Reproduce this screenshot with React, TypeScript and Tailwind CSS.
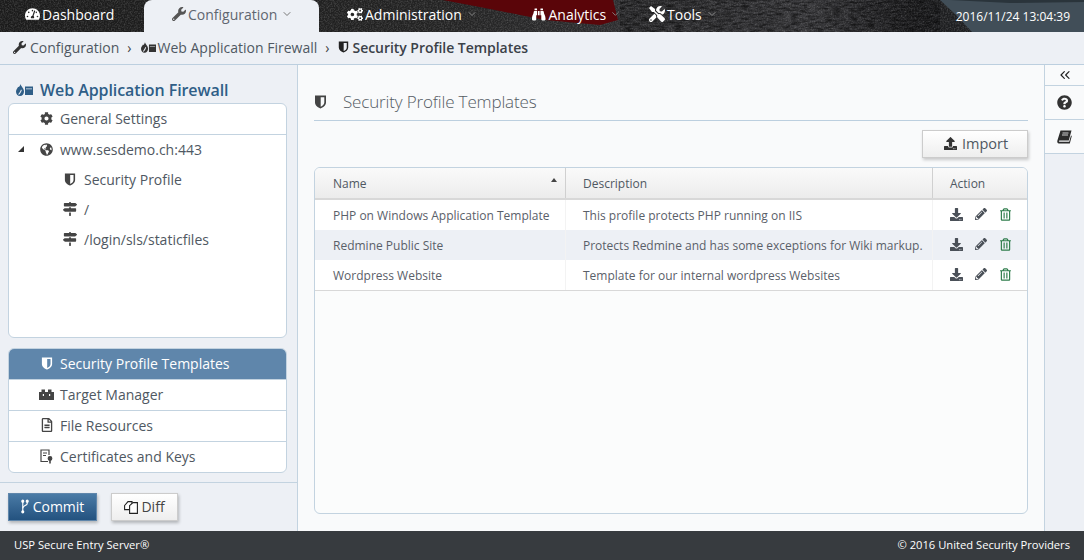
import { ChevronDown, ChevronsLeft } from "lucide-react";
import {
  FaBinoculars,
  FaCog,
  FaCogs,
  FaDownload,
  FaGlobeAmericas,
  FaMapSigns,
  FaPencilAlt,
  FaQuestionCircle,
  FaRegFileAlt,
  FaRegTrashAlt,
  FaTachometerAlt,
  FaTools,
  FaUpload,
  FaWrench,
} from "react-icons/fa";

const font = "font-['Open_Sans','Noto_Sans',sans-serif]";

const TopBackground = () => (
  <svg className="absolute inset-0 w-full h-full" viewBox="0 0 1084 32" preserveAspectRatio="none">
    <defs>
      <linearGradient id="rock" x1="0" x2="1" y1="0" y2="0">
        <stop offset="0" stopColor="#1b1b1b" />
        <stop offset="0.4" stopColor="#232323" />
        <stop offset="0.58" stopColor="#2e2e30" />
        <stop offset="0.75" stopColor="#3a3a3d" />
        <stop offset="0.84" stopColor="#1e1e20" />
        <stop offset="1" stopColor="#1c2023" />
      </linearGradient>
      <filter id="grain" x="0" y="0" width="100%" height="100%">
        <feTurbulence type="fractalNoise" baseFrequency="0.7" numOctaves="3" seed="4" />
        <feColorMatrix values="0 0 0 0 1  0 0 0 0 1  0 0 0 0 1  1.6 0 0 0 -0.62" />
      </filter>
      <filter id="streaks" x="0" y="0" width="100%" height="100%">
        <feTurbulence type="fractalNoise" baseFrequency="0.12 0.5" numOctaves="2" seed="9" />
        <feColorMatrix values="0 0 0 0 0  0 0 0 0 0  0 0 0 0 0  2.4 0 0 0 -0.9" />
      </filter>
    </defs>
    <rect width="1084" height="32" fill="url(#rock)" />
    <rect width="1084" height="32" filter="url(#grain)" opacity="0.22" />
    <rect x="620" width="320" height="32" filter="url(#streaks)" opacity="0.55" />
    <polygon points="443,0 613,0 618,20 600,25 545,20 490,9" fill="#5a0509" />
    <polygon points="940,0 1084,0 1084,32 972,32 955,14" fill="#414e58" />
    <polygon points="950,0 1084,0 1084,2 1010,3" fill="#2a343b" />
  </svg>
);

// half filled shield used all over the WAF pages
const Shield = ({ className }: { className: string }) => (
  <svg viewBox="0 0 12 14" className={className} fill="currentColor" fillRule="evenodd">
    <path d="M0.5 0.5H11.5V7.5C11.5 10.5 8.5 12.5 6 13.5C3.5 12.5 0.5 10.5 0.5 7.5ZM6.2 2.2H9.8V7.5C9.8 9.4 8 11 6.2 11.8Z" />
  </svg>
);

const Waf = ({ className }: { className: string }) => (
  <svg viewBox="0 0 17 12" className={className} fill="currentColor" fillRule="evenodd">
    <path d="M4.5 0C5 2.5 8 4 8 7.5C8 10 6.4 12 4 12C1.6 12 0 10 0 7.5C0 5.5 1.5 4.5 2 3C3 3.5 4 2 4.5 0ZM5 5.5C4.2 7.5 3.2 9 2.2 10.2L3 10.8C4.4 9.4 5.4 7.6 5.8 6Z" />
    <path d="M9 2.5H17V11H9ZM10 4.6V5.2H16V4.6Z" />
  </svg>
);

const NavItem = ({
  icon,
  label,
  active,
  chevron,
  className,
}: {
  icon: React.ReactNode;
  label: string;
  active?: boolean;
  chevron?: boolean;
  className: string;
}) => (
  <div
    className={`flex items-center h-8 pb-[4px] text-[14px] ${className} ${
      active ? "bg-[#edf0f5] text-[#5f6670] rounded-t-lg" : "text-white"
    }`}
  >
    {icon}
    <span className="ml-[2px]">{label}</span>
    {chevron && <ChevronDown className={`w-3 h-3 ml-[4px] ${active ? "text-[#777]" : "text-[#888]"}`} />}
  </div>
);

const SideRow = ({
  icon,
  label,
  active,
  last,
}: {
  icon: React.ReactNode;
  label: string;
  active?: boolean;
  last?: boolean;
}) => (
  <div
    className={`flex items-center pl-[30px] pb-[2px] text-[14px] ${last ? "h-[30px]" : "h-[31px] border-b border-[#c3d3e0]"} ${
      active ? "bg-[#5f86ab] text-white" : "text-[#4f5862]"
    }`}
  >
    <span className={`w-[15px] flex justify-center mr-[6px] ${active ? "text-white" : "text-[#444]"}`}>{icon}</span>
    {label}
  </div>
);

const TreeRow = ({ icon, label }: { icon: React.ReactNode; label: string }) => (
  <div className="flex items-center h-[30px] pl-[54px] pb-[2px] text-[14px] text-[#4f5862]">
    <span className="w-[14px] flex justify-center mr-[7px] text-[#444]">{icon}</span>
    {label}
  </div>
);

const rows = [
  ["PHP on Windows Application Template", "This profile protects PHP running on IIS"],
  ["Redmine Public Site", "Protects Redmine and has some exceptions for Wiki markup."],
  ["Wordpress Website", "Template for our internal wordpress Websites"],
];

export default function App() {
  return (
    <div className={`${font} w-[1084px] h-[560px] flex flex-col overflow-hidden bg-[#edf0f5]`}>
      {/* Top nav */}
      <header className="relative h-8 shrink-0 flex bg-[#222]">
        <TopBackground />
        <div className="relative flex w-full">
          <NavItem className="w-[144px] pl-[25px]" icon={<FaTachometerAlt className="w-[15px] h-[14px]" />} label="Dashboard" />
          <NavItem
            className="w-[175px] pl-[28px]"
            active
            chevron
            icon={<FaWrench className="w-[14px] h-[14px] text-[#555]" />}
            label="Configuration"
          />
          <NavItem className="w-[185px] pl-[28px]" chevron icon={<FaCogs className="w-[16px] h-[15px]" />} label="Administration" />
          <NavItem className="w-[117px] pl-[28px]" chevron icon={<FaBinoculars className="w-[15px] h-[15px] mr-[1px]" />} label="Analytics" />
          <NavItem className="w-[105px] pl-[28px]" chevron icon={<FaTools className="w-[16px] h-[16px]" />} label="Tools" />
          <div className="ml-auto pr-[14px] pt-[1px] flex items-center text-[12px] text-white">2016/11/24 13:04:39</div>
        </div>
      </header>

      {/* Breadcrumb */}
      <div className="h-[33px] shrink-0 flex items-center pl-[13px] pb-[2px] text-[14px] text-[#4f5862] border-b border-[#bccfdf]">
        <FaWrench className="w-[13px] h-[13px] text-[#333] mr-[4px]" />
        Configuration
        <span className="ml-[8px] mr-[9px] text-[#444]">›</span>
        <Waf className="w-[15px] h-[11px] text-[#333] mr-[2px]" />
        Web Application Firewall
        <span className="ml-[8px] mr-[9px] text-[#444]">›</span>
        <Shield className="w-[11px] h-[12px] text-[#222] mr-[3px]" />
        <span className="text-[#3b4148] font-semibold tracking-[-0.04px]">Security Profile Templates</span>
      </div>

      <div className="flex-1 flex min-h-0">
        {/* Sidebar */}
        <aside className="w-[298px] shrink-0 flex flex-col border-r border-[#c3d3e0]">
          <div className="h-[38px] flex items-end pl-[16px] pb-[1px] text-[16px] font-semibold tracking-[-0.08px] text-[#2f5e87]">
            <Waf className="w-[17px] h-[12px] mb-[6px] mr-[7px] text-[#2f5e87]" />
            Web Application Firewall
          </div>
          <div className="ml-[8px] mr-[10px] h-[235px] bg-white border border-[#c3d3e0] rounded-[6px] overflow-hidden">
            <SideRow icon={<FaCog className="w-[13px] h-[13px]" />} label="General Settings" />
            <div className="relative flex items-center h-[30px] pl-[30px] pb-[2px] text-[14px] text-[#4f5862]">
              <span className="absolute left-[9px] top-[11px] w-0 h-0 border-l-[6px] border-l-transparent border-b-[6px] border-b-[#333]" />
              <span className="w-[15px] flex justify-center mr-[6px] text-[#444]">
                <FaGlobeAmericas className="w-[13px] h-[13px]" />
              </span>
              www.sesdemo.ch:443
            </div>
            <TreeRow icon={<Shield className="w-[12px] h-[13px]" />} label="Security Profile" />
            <TreeRow icon={<FaMapSigns className="w-[14px] h-[14px]" />} label="/" />
            <TreeRow icon={<FaMapSigns className="w-[14px] h-[14px]" />} label="/login/sls/staticfiles" />
          </div>
          <div className="ml-[8px] mr-[10px] mt-[10px] bg-white border border-[#c3d3e0] rounded-[6px] overflow-hidden">
            <SideRow active icon={<Shield className="w-[12px] h-[13px]" />} label="Security Profile Templates" />
            <SideRow
              icon={
                <svg viewBox="0 0 15 11" className="w-[15px] h-[11px]" fill="currentColor">
                  <path d="M0 3H2.5V0.5H6V3H9V0.5H12.5V3H15V11H0ZM3.8 5V7H5V5ZM10 5V7H11.2V5Z" fillRule="evenodd" />
                </svg>
              }
              label="Target Manager"
            />
            <SideRow icon={<FaRegFileAlt className="w-[12px] h-[14px]" />} label="File Resources" />
            <SideRow
              last
              icon={
                <svg viewBox="0 0 13 15" className="w-[13px] h-[15px]" fill="none" stroke="currentColor" strokeWidth="1.2">
                  <path d="M8 12.5H1V1H9V6" />
                  <path d="M3 4H7M3 6.5H6" />
                  <circle cx="10" cy="9.5" r="1.8" fill="currentColor" />
                  <path d="M10 11V14.5" strokeWidth="1.6" />
                </svg>
              }
              label="Certificates and Keys"
            />
          </div>
          <div className="mt-[9px] flex-1 border-t border-[#c3d3e0] pl-[8px] pt-[10px] flex items-start gap-[14px]">
            <div className="w-[89px] h-[28px] pb-[1px] flex items-center justify-center text-[14px] text-white bg-gradient-to-b from-[#4a7ba6] to-[#23527f] border border-[#5f86ab] shadow-[1px_2px_3px_rgba(0,0,0,0.25)]">
              <svg viewBox="0 0 9 16" className="w-[8px] h-[15px] mr-[4px]" fill="currentColor" stroke="currentColor" strokeWidth="1.3">
                <path d="M2 2V14" fill="none" />
                <path d="M7 2V4.5C7 7 2 7 2 10" fill="none" />
                <circle cx="2" cy="2" r="1.1" />
                <circle cx="7" cy="2" r="1.1" />
                <circle cx="2" cy="14" r="1.1" />
              </svg>
              Commit
            </div>
            <div className="w-[67px] h-[28px] pb-[1px] flex items-center justify-center text-[14px] text-[#444] bg-gradient-to-b from-white to-[#eeeeee] border border-[#ccc] shadow-[1px_2px_3px_rgba(0,0,0,0.25)]">
              <svg viewBox="0 0 14 14" className="w-[14px] h-[14px] mr-[3px]" fill="#fff" stroke="#222" strokeWidth="1.1">
                <path d="M0.6 5.5L4 1.6H8V9.6H0.6Z" />
                <path d="M5.6 5.6L9 2.6H13.4V13.4H5.6Z" />
              </svg>
              Diff
            </div>
          </div>
        </aside>

        {/* Main */}
        <main className="flex-1 bg-[#f9fafb] px-[16px] pt-[20px] flex flex-col">
          <div className="h-[36px] flex items-center pb-[1px] border-b border-[#bccfdf] text-[#555c64]">
            <Shield className="w-[13px] h-[14px] text-[#444] mr-[16px]" />
            <span className="text-[17px] font-light tracking-[-0.15px]">Security Profile Templates</span>
          </div>
          <div className="flex justify-end mt-[9px]">
            <div className="w-[106px] h-[28px] pb-[1px] pl-[2px] flex items-center justify-center text-[14.5px] text-[#4f5862] bg-gradient-to-b from-white to-[#eeeeee] border border-[#ccc] shadow-[1px_2px_3px_rgba(0,0,0,0.2)]">
              <FaUpload className="w-[13px] h-[13px] text-[#333] mr-[5px]" />
              Import
            </div>
          </div>
          <div className="mt-[9px] h-[347px] mb-[17px] bg-white/40 border border-[#c3d3e0] rounded-[6px] overflow-hidden text-[12px] text-[#5a6069]">
            <div className="relative flex h-[32px] bg-gradient-to-b from-[#fafafa] to-[#ececec] border-b-[2px] border-[#d8d8d8] text-[#4f5862]">
              <div className="w-[251px] flex items-center pt-[1px] pl-[18px] border-r border-[#d0d0d0]">Name</div>
              <div className="w-[367px] flex items-center pt-[1px] pl-[17px] border-r border-[#d0d0d0]">Description</div>
              <div className="flex-1 flex items-center pt-[1px] pl-[17px]">Action</div>
              <span className="absolute left-[236px] top-[10px] w-0 h-0 border-x-[3px] border-x-transparent border-b-[4px] border-b-[#444]" />
            </div>
            {rows.map((r, i) => (
              <div
                key={r[0]}
                className={`flex items-stretch ${i === 1 ? "bg-[#edf0f5]" : "bg-white"} ${
                  i === 2 ? "border-b border-[#d8d8d8] h-[31px]" : "h-[30px]"
                }`}
              >
                <div className="w-[251px] flex items-center pt-[1px] pl-[18px] border-r border-[#f3f3f3]">{r[0]}</div>
                <div className="w-[367px] flex items-center pt-[1px] pl-[17px] border-r border-[#f3f3f3] whitespace-nowrap">{r[1]}</div>
                <div className="flex-1 flex items-center pl-[17px] pb-[2px] text-[#4a5058]">
                  <FaDownload className="w-[13px] h-[13px] mr-[12px]" />
                  <FaPencilAlt className="w-[12px] h-[12px] mr-[13px]" />
                  <FaRegTrashAlt className="w-[11px] h-[13px] text-[#2f7d4c]" />
                </div>
              </div>
            ))}
          </div>
        </main>

        {/* Right rail */}
        <div className="w-[40px] shrink-0 border-l border-[#c3d3e0] flex flex-col">
          <div className="h-[21px] flex items-center justify-center border-b border-[#c3d3e0] bg-[#f9fafb]">
            <ChevronsLeft className="w-[16px] h-[16px] text-[#222]" strokeWidth={1.8} />
          </div>
          <div className="h-[34px] flex items-center justify-center border-b border-[#c3d3e0] bg-[#f9fafb]">
            <FaQuestionCircle className="w-[15px] h-[15px] text-[#333]" />
          </div>
          <div className="h-[34px] flex items-center justify-center border-b border-[#c3d3e0] bg-[#f9fafb]">
            <svg viewBox="0 0 15 14" className="w-[15px] h-[14px]" fill="#2b2b2b">
              <path d="M3.5 0.5H14.5L11.8 10.5H2.5C1.8 10.5 1.6 11.8 2.5 11.8H12.2L14 5.5L14.8 6L12.8 13.5H2C0.4 13.5 0 12 0.4 10.5Z" />
              <path d="M5.5 3H11.5M5 5H11" stroke="#f9fafb" strokeWidth="0.8" />
            </svg>
          </div>
        </div>
      </div>

      {/* Footer */}
      <footer className="h-[29px] shrink-0 bg-[#373b3f] flex items-center justify-between px-[14px] text-[11.2px] text-white">
        <span>USP Secure Entry Server®</span>
        <span>© 2016 United Security Providers</span>
      </footer>
    </div>
  );
}
